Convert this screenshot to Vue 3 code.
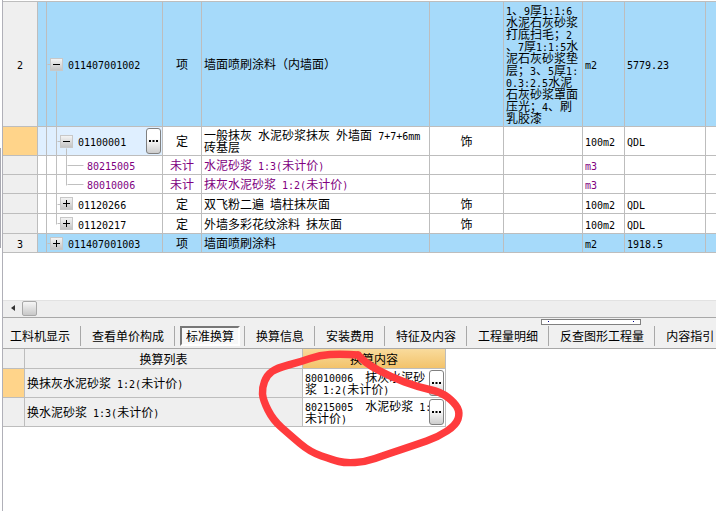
<script setup>
import { h } from 'vue'

const T = (props) =>
  h(
    'div',
    { class: 'ln' },
    props.t
      .split(/([\x20-\x7e]+)/)
      .filter(Boolean)
      .map((s) => h('span', { class: /^[\x20-\x7e]/.test(s) ? 'lat' : '' }, s))
  )
T.props = ['t']

const rows = [
  { h: 125, kind: 'blue', no: '2', level: 0, exp: 'minus', code: '011407001002', type: '项', name: ['墙面喷刷涂料（内墙面）'], fee: '',
    desc: ['1、9厚1:1:6', '水泥石灰砂浆', '打底扫毛；2', '、7厚1:1:5水', '泥石灰砂浆垫', '层；3、5厚1:', '0.3:2.5水泥', '石灰砂浆罩面', '压光；4、刷', '乳胶漆'], unit: 'm2', qty: '5779.23' },
  { h: 29, kind: 'sel', no: '', level: 1, exp: 'minus', code: '01100001', type: '定', name: ['一般抹灰 水泥砂浆抹灰 外墙面 7+7+6mm', '砖基层'], fee: '饰', desc: [], unit: '100m2', qty: 'QDL', btn: true },
  { h: 19, kind: 'sub', no: '', level: 2, code: '80215005', type: '未计', name: ['水泥砂浆 1:3(未计价)'], fee: '', desc: [], unit: 'm3', qty: '' },
  { h: 19, kind: 'sub', no: '', level: 2, code: '80010006', type: '未计', name: ['抹灰水泥砂浆 1:2(未计价)'], fee: '', desc: [], unit: 'm3', qty: '' },
  { h: 20, kind: '', no: '', level: 1, exp: 'plus', code: '01120266', type: '定', name: ['双飞粉二遍 墙柱抹灰面'], fee: '饰', desc: [], unit: '100m2', qty: 'QDL' },
  { h: 20, kind: '', no: '', level: 1, exp: 'plus', code: '01120217', type: '定', name: ['外墙多彩花纹涂料 抹灰面'], fee: '饰', desc: [], unit: '100m2', qty: 'QDL' },
  { h: 19, kind: 'blue', no: '3', level: 0, exp: 'plus', code: '011407001003', type: '项', name: ['墙面喷刷涂料'], fee: '', desc: [], unit: 'm2', qty: '1918.5' },
]

const tabs = ['工料机显示', '查看单价构成', '标准换算', '换算信息', '安装费用', '特征及内容', '工程量明细', '反查图形工程量', '内容指引']

const convs = [
  { name: '换抹灰水泥砂浆 1:2(未计价)', lines: ['80010006  抹灰水泥砂', '浆 1:2(未计价)'], sel: true },
  { name: '换水泥砂浆 1:3(未计价)', lines: ['80215005  水泥砂浆 1:', '未计价)'] },
]

const treeLines = [
  [56, 71, 56, 224], [47, 64, 50, 64], [47, 243, 50, 243],
  [57, 141, 60, 141], [57, 204, 60, 204], [57, 223, 60, 223],
  [66, 148, 66, 185], [67, 165, 83, 165], [67, 184, 83, 184],
]

const pts = [
  [358, 355], [365, 363], [391, 377], [418, 387], [441, 392], [455, 403], [460, 413], [456, 425],
  [438, 437], [415, 445], [385, 455], [365, 462], [345, 463], [333, 460], [310, 452], [290, 435],
  [273, 420], [263, 400], [262, 388], [267, 375], [277, 368], [300, 362], [320, 355], [340, 354], [358, 355],
]
let mark = `M${pts[0][0]} ${pts[0][1]}`
for (let i = 1; i < pts.length - 1; i++) {
  const mx = (pts[i][0] + pts[i + 1][0]) / 2
  const my = (pts[i][1] + pts[i + 1][1]) / 2
  mark += ` Q${pts[i][0]} ${pts[i][1]} ${mx} ${my}`
}
mark += ` L${pts[pts.length - 1][0]} ${pts[pts.length - 1][1]}`
</script>

<template>
  <div class="page">
    <div class="frame">
      <section class="upper">
        <div v-for="r in rows" :key="r.code" class="row" :class="r.kind" :style="{ height: r.h + 'px' }">
          <div class="c head" :class="{ picked: r.kind === 'sel' }"><T :t="r.no" /></div>
          <div class="c gut"></div>
          <div class="c tree" :class="'lv' + r.level">
            <span v-if="r.exp" class="exp" :class="r.exp"></span>
            <T :t="r.code" />
            <button v-if="r.btn" class="more" type="button">
              <svg width="9" height="3" viewBox="0 0 9 3"><rect x="0" width="2" height="2" /><rect x="3.500" width="2" height="2" /><rect x="7" width="2" height="2" /></svg>
            </button>
          </div>
          <div class="c mid">{{ r.type }}</div>
          <div class="c left name"><T v-for="l in r.name" :key="l" :t="l" /></div>
          <div class="c mid">{{ r.fee }}</div>
          <div class="c left"><T v-for="l in r.desc" :key="l" :t="l" /></div>
          <div class="c left"><T :t="r.unit" /></div>
          <div class="c left"><T :t="r.qty" /></div>
          <div class="c"></div>
        </div>
      </section>

      <div class="scroll">
        <span class="arrow"></span>
        <span class="thumb"></span>
      </div>

      <nav class="tabs">
        <div v-for="(t, i) in tabs" :key="t" class="tab" :class="{ on: i === 2 }"><span>{{ t }}</span></div>
        <div class="grip"><i></i><i></i></div>
      </nav>

      <section class="lower">
        <div class="lrow hd">
          <div class="c"></div>
          <div class="c mid">换算列表</div>
          <div class="c mid gold">换算内容</div>
        </div>
        <div v-for="c in convs" :key="c.name" class="lrow body">
          <div class="c head" :class="{ picked: c.sel }"></div>
          <div class="c left grey"><T :t="c.name" /></div>
          <div class="c left val">
            <T v-for="l in c.lines" :key="l" :t="l" />
            <button class="more" type="button">
              <svg width="9" height="3" viewBox="0 0 9 3"><rect x="0" width="2" height="2" /><rect x="3.500" width="2" height="2" /><rect x="7" width="2" height="2" /></svg>
            </button>
          </div>
        </div>
      </section>
    </div>

    <svg class="overlay" width="716" height="511" viewBox="0 0 716 511">
      <rect x="0" y="148" width="1" height="100" fill="#a8a8b0" />
      <line v-for="(l, i) in treeLines" :key="i" :x1="l[0] + 0.5" :y1="l[1] + 0.5" :x2="l[2] + 0.5" :y2="l[3] + 0.5" stroke="#c0c0c0" />
      <path :d="mark" fill="none" stroke="#ff3b3d" stroke-width="7.5" stroke-linecap="round" stroke-linejoin="round" />
    </svg>
  </div>
</template>

<style scoped>
.page {
  position: relative;
  width: 716px;
  height: 511px;
  overflow: hidden;
  background: #fff;
  color: #000;
  font: 12px/12px "Noto Sans CJK SC", sans-serif;
}
.frame {
  box-sizing: border-box;
  height: 511px;
  margin-left: 2px;
  border-left: 1px solid #b0b0b8;
  display: flex;
  flex-direction: column;
}
.upper {
  height: 298px;
  margin-top: 1px;
  border-top: 1px solid #bdbdbd;
  flex: none;
}
.row {
  display: grid;
  grid-template-columns: 35px 9px 116px 39px 228px 74px 79px 42px 81px 10px;
}
.c {
  box-sizing: border-box;
  border-right: 1px solid #bdbdbd;
  border-bottom: 1px solid #bdbdbd;
  display: flex;
  min-width: 0;
  flex-direction: column;
  justify-content: center;
  position: relative;
}
.row .c:last-child { border-right: 0; }
.head { background: #efefef; align-items: center; }
.picked { background: #ffd48a; }
.mid { align-items: center; }
.left { padding-left: 2px; }
.tree { flex-direction: row; align-items: center; justify-content: flex-start; }
.lv0 { padding-left: 3px; }
.lv1 { padding-left: 13px; }
.lv2 { padding-left: 40px; }
.exp {
  box-sizing: border-box;
  width: 13px;
  height: 13px;
  margin-right: 5px;
  border: 1px solid #c8c8c8;
  background: linear-gradient(#f4f4f4, #c4c4c4);
  position: relative;
}
.exp::before {
  content: "";
  position: absolute;
  left: 2px;
  top: 5px;
  width: 7px;
  height: 1px;
  background: #000;
}
.exp.plus::after {
  content: "";
  position: absolute;
  left: 5px;
  top: 2px;
  width: 1px;
  height: 7px;
  background: #000;
}
.blue .c:not(.head) { background: #a6dafa; }
.sel .gut, .sel .tree { background: #dfefff; }
.sub { color: #800080; }
.more {
  position: absolute;
  right: 1px;
  top: 1px;
  box-sizing: border-box;
  width: 15px;
  height: 26px;
  padding: 0;
  border: 1px solid #808080;
  border-radius: 3px;
  background: linear-gradient(#fff 40%, #cdcdcd);
  display: flex;
  align-items: center;
  justify-content: center;
}
.more svg { display: block; }

.scroll {
  position: relative;
  box-sizing: border-box;
  height: 18px;
  background: #eee;
  border-top: 1px solid #e2e2e2;
  border-bottom: 1px solid #a8a8a8;
  flex: none;
}
.arrow {
  position: absolute;
  left: 8px;
  top: 4px;
  border: 3px solid transparent;
  border-left-width: 0;
  border-right: 4px solid #333;
}
.thumb {
  position: absolute;
  left: 19px;
  top: 0;
  box-sizing: border-box;
  width: 15px;
  height: 15px;
  border: 1px solid #a8a8a8;
  border-radius: 2px;
  background: linear-gradient(#f6f6f6, #c8c8c8);
}

.tabs {
  position: relative;
  box-sizing: border-box;
  height: 31px;
  flex: none;
  padding: 8px 0 2px 0;
  display: flex;
  background: #f0f0f0;
  border-bottom: 1px solid #a8a8a8;
}
.tab {
  height: 20px;
  padding: 0 10px 0 11px;
  border-right: 1px solid #a8a8a8;
  display: flex;
  align-items: center;
  flex: none;
}
.tab:first-child { padding-left: 7px; }
.tab:last-of-type { border-right: 0; }
.tab.on { padding: 0 4px 0 5px; }
.tab.on span {
  box-sizing: border-box;
  height: 20px;
  padding: 0 4px;
  display: flex;
  align-items: center;
  background: #f8f8f8;
  border: 2px solid;
  border-color: #777 #fff #fff #777;
}
.grip {
  position: absolute;
  left: 538px;
  top: 1px;
  box-sizing: border-box;
  width: 100px;
  height: 6px;
  border: 1px solid #808080;
  background: #fff;
  display: flex;
  justify-content: space-between;
  padding: 1px 6px;
}
.grip i { width: 1px; height: 1px; background: #00008b; }

.lrow {
  display: grid;
  grid-template-columns: 22px 278px 143px;
  width: 443px;
}
.hd { height: 20px; }
.hd .c { background: #efefef; }
.hd .gold { background: linear-gradient(#f9db9c, #f3c36b); }
.body { height: 29px; }
.grey { background: #efefef; }
.val { overflow: hidden; }
</style>

<style>
.lat {
  font-family: "DejaVu Sans Mono", monospace;
  font-size: 10px;
}
.ln {
  height: 12px;
  line-height: 12px;
  white-space: pre;
}
.overlay {
  position: absolute;
  left: 0;
  top: 0;
  pointer-events: none;
}
</style>
